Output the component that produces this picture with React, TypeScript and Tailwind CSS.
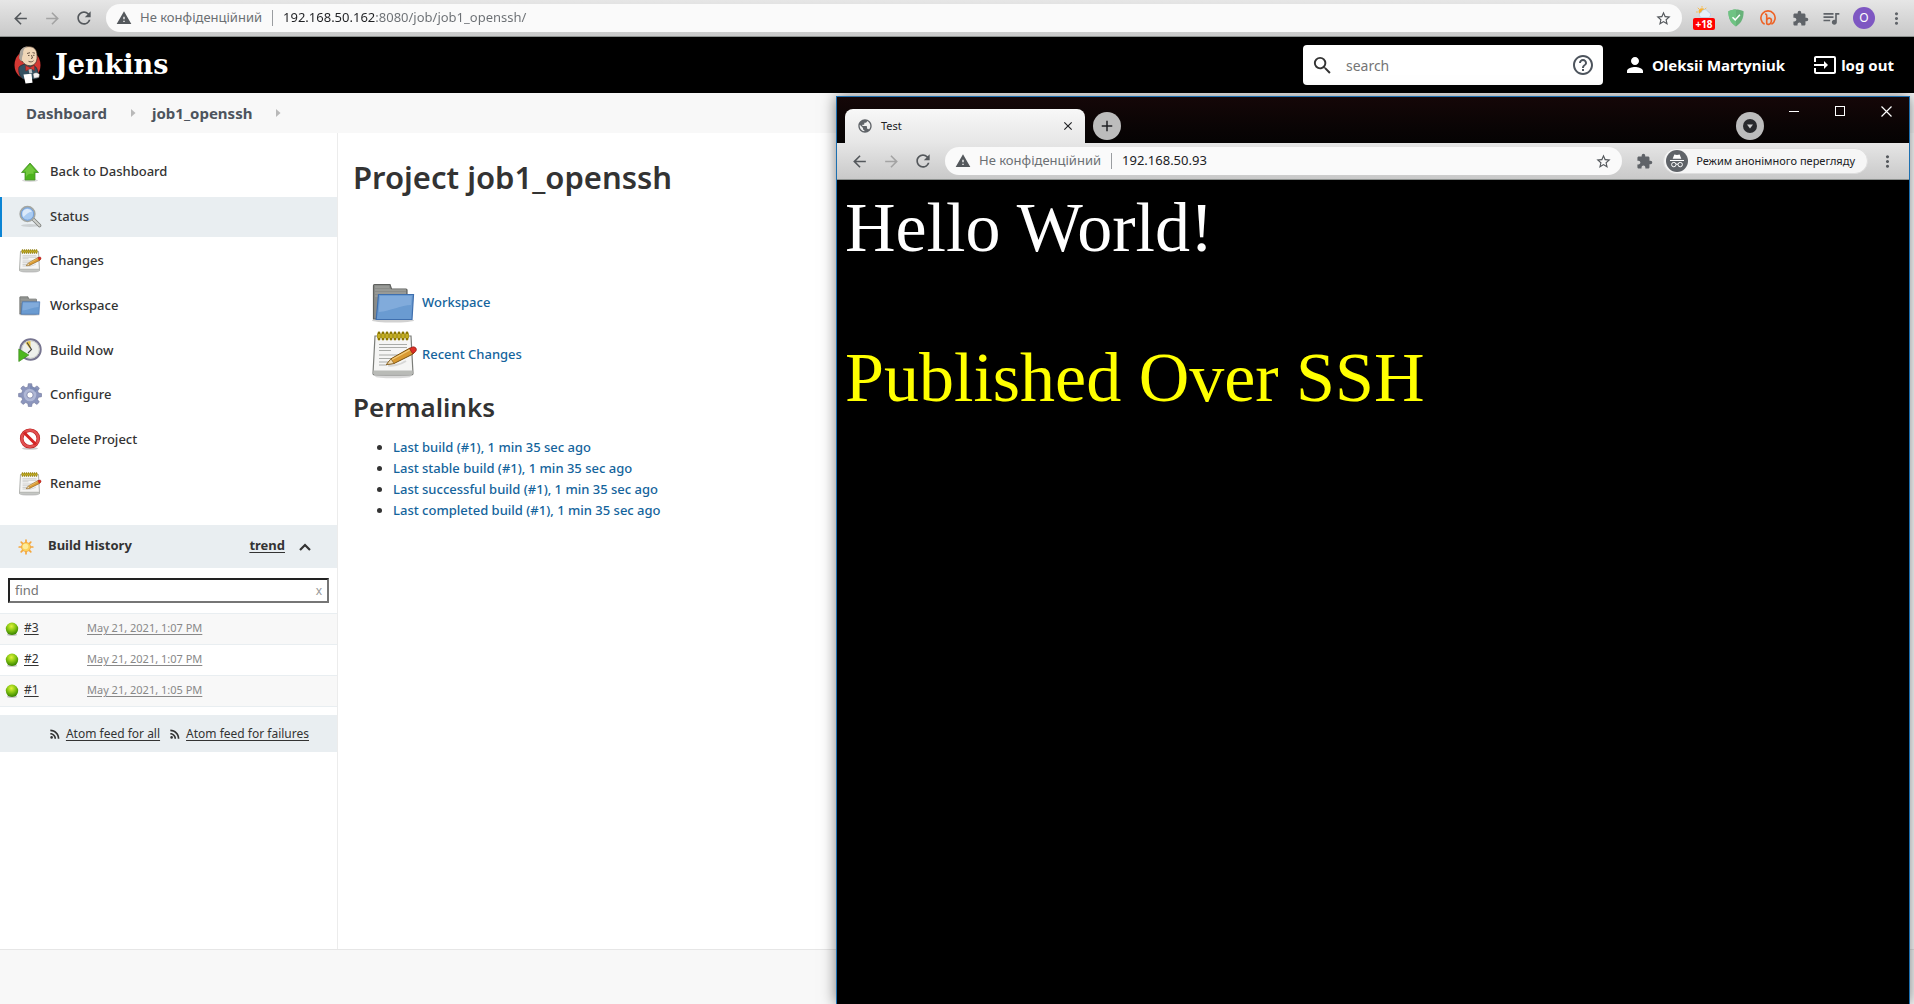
import type { ReactNode } from "react";
import {
  MdArrowBack,
  MdArrowForward,
  MdClose,
  MdExtension,
  MdHelpOutline,
  MdInput,
  MdAdd,
  MdMoreVert,
  MdPerson,
  MdPublic,
  MdQueueMusic,
  MdRefresh,
  MdRssFeed,
  MdSearch,
  MdStarBorder,
  MdWarning,
} from "react-icons/md";

/* ---------- drawings ---------- */

function Butler() {
  return (
    <svg width="27" height="38" viewBox="0 0 27 38" aria-hidden="true">
      <ellipse cx="13.5" cy="19" rx="13" ry="14.5" fill="#d33833" />
      <path d="M5 21c2-2 5-3 8-3 5 0 9 2 10 5l2 7c-1 3-4 3-6 3H9c-3-2-5-7-4-12z" fill="#335061" stroke="#1a2a33" strokeWidth=".7" />
      <path d="M6 9C6 3 10 .6 15 .6S23 4 23 9c.4 5-.6 9-5 10.400-4 1-8-1-9.500-4C6.500 15 5 13 6 9z" fill="#f0d6b7" stroke="#3b2a20" strokeWidth=".7" />
      <path d="M8 15c-2.500-.500-3.600-3-2.400-6C5.300 4 9 .8 13 .6 9.500 3 9 5 9.200 8c-1 2-1.500 4-1.200 7z" fill="#a9a49c" />
      <path d="M13 7.500l3-.8M18.500 6.600l2.500.6M14 9.500h1.500M19 9.300h1.500M17.500 9l1 3-1.500.5M14.500 15.300c2 1 4 .6 5-.6" stroke="#4a382c" strokeWidth=".8" fill="none" />
      <path d="M11.500 19.500l4.500 2 4.500-2.500v5.500L16.500 22.500l-4.700 2.500z" fill="#d33833" stroke="#81211d" strokeWidth=".5" />
      <path d="M14.500 23.500l3-.5.8 4-3 .6z" fill="#f7f7f7" opacity=".7" />
      <path d="M9.500 28.500l8-.8 1 9-7 .9z" fill="#fff" />
      <path d="M19 28c2-2 5-1.500 6.500.5l-.6 3-5 .8z" fill="#f2f2f2" stroke="#555" strokeWidth=".5" />
    </svg>
  );
}

function UpArrow() {
  return (
    <svg width="24" height="24" viewBox="0 0 24 24" aria-hidden="true">
      <ellipse cx="12" cy="20.500" rx="8" ry="1.500" fill="#000" opacity=".15" />
      <path d="M12 3l8.500 9.500H17V20H7v-7.500H3.500z" fill="#4cb31c" stroke="#4a8f2b" strokeWidth=".8" />
      <path d="M12 4.500l6 7h-2.500V14c-4-1-6 0-7.500 3v-5.500H5.700z" fill="#8ad653" opacity=".6" />
    </svg>
  );
}

function Magnifier() {
  return (
    <svg width="24" height="24" viewBox="0 0 24 24" aria-hidden="true">
      <ellipse cx="12" cy="20.500" rx="9" ry="1.500" fill="#000" opacity=".12" />
      <path d="M15.500 14.500l6 6" stroke="#7d7f7c" strokeWidth="3.600" strokeLinecap="round" />
      <path d="M15.500 14.500l6 6" stroke="#cfd1cd" strokeWidth="2" strokeLinecap="round" />
      <circle cx="9.500" cy="9" r="7.300" fill="#a9cbf2" stroke="#a3a6a1" strokeWidth="1.700" />
      <circle cx="9.500" cy="9" r="6.200" fill="none" stroke="#6f9bd6" strokeWidth=".9" />
      <path d="M4.500 9a5 5 0 0 1 9.500-2.200C11 6.500 8 9.500 5.500 12c-.6-.8-1-2-1-3z" fill="#e4effb" opacity=".85" />
    </svg>
  );
}

function Notepad({ size = 24 }: { size?: number }) {
  return (
    <svg width={size} height={size} viewBox="0 0 48 48" aria-hidden="true">
      <ellipse cx="23" cy="45.500" rx="18" ry="1.800" fill="#000" opacity=".15" />
      <path d="M5 5h36l2 37.500a1.500 1.500 0 0 1-1.500 1.500H4.500A1.500 1.500 0 0 1 3 42.500z" fill="#f5f5f4" stroke="#7b7d79" strokeWidth="1.200" />
      <path d="M3.500 39.500h39v3.500h-39z" fill="#b9bbb7" />
      <path d="M7 2.500h32V7H7z" fill="#c4b13a" />
      <path d="M9 2v6M13 2v6M17 2v6M21 2v6M25 2v6M29 2v6M33 2v6M37 2v6" stroke="#8a7500" strokeWidth="2.800" strokeLinecap="round" />
      <path d="M9 3v4M13 3v4M17 3v4M21 3v4M25 3v4M29 3v4M33 3v4M37 3v4" stroke="#f3dc3c" strokeWidth="1.100" />
      <path d="M9 13.500h28M9 16.500h28M9 19.500h12M9 24h26M9 27.500h22M9 31h12M9 34h8" stroke="#a9aba8" strokeWidth="1" />
      <path d="M18 34.500c4 .5 12-.5 18-4.500" stroke="#000" strokeWidth="2" opacity=".12" fill="none" />
      <path d="M16.500 33.500l4.500-5.700L40 17l4 .8.600 3.200-1.600 2-19 9.500z" fill="#d99a32" stroke="#7a5110" strokeWidth="1" />
      <path d="M22 28.500l18-9.700" stroke="#f4cd7c" strokeWidth="1.300" />
      <path d="M39.500 17.500l3-1.500c1.600-.5 3.500.5 3.800 2 .2 1.500-.5 2.700-1.800 3.500l-2 1z" fill="#dd2f26" stroke="#8f1b14" strokeWidth=".7" />
      <path d="M16.500 33.500l4.500-5.700 3 4.700z" fill="#efdcb4" stroke="#7a5110" strokeWidth=".6" />
    </svg>
  );
}

function Folder({ size = 24 }: { size?: number }) {
  return (
    <svg width={size} height={size} viewBox="0 0 48 48" aria-hidden="true">
      <ellipse cx="23" cy="41.500" rx="21" ry="2" fill="#000" opacity=".18" />
      <path d="M3.500 40V6.500a1 1 0 0 1 1-1H20l1.500 4.500H36a1 1 0 0 1 1 1V40z" fill="#8a8c89" stroke="#5f615e" strokeWidth="1.200" />
      <path d="M5 8h14M5 11h31M5 14h31M5 17h6" stroke="#a8aaa7" strokeWidth=".9" />
      <path d="M8.500 15.500h35L42 40.500H6.200z" fill="#6a9bd1" stroke="#3f6fae" strokeWidth="1.200" />
      <path d="M9.800 17h32L41 26c-10 0-20 6-32.200 7z" fill="#8db4e0" opacity=".65" />
    </svg>
  );
}

function ClockPlay() {
  return (
    <svg width="24" height="24" viewBox="0 0 24 24" aria-hidden="true">
      <circle cx="12.500" cy="11.500" r="10.200" fill="#eef0ec" stroke="#76748f" strokeWidth="2" />
      <circle cx="12.500" cy="11.500" r="8.700" fill="none" stroke="#c6c8c4" strokeWidth=".9" />
      <path d="M12.500 11.500L7.500 5a8 8 0 0 1 5-2z" fill="#e8c64b" />
      <path d="M9 4.500l4.500 7-3.500 3.500" stroke="#444" strokeWidth="1.100" fill="none" />
      <path d="M.8 11l10 6-10 6.500z" fill="#4db81e" stroke="#3b8a1c" strokeWidth=".7" />
    </svg>
  );
}

function Gear() {
  return (
    <svg width="24" height="24" viewBox="0 0 24 24" aria-hidden="true">
      <g fill="#8c96bd" stroke="#6d7399" strokeWidth=".6">
        <path d="M10.300.7h3.400l.5 3.200 2.200.9 2.700-1.900 2.300 2.300-1.800 2.800.9 2 3 .6v3.100l-3.100.6-.9 2.100 1.800 2.700-2.400 2.300-2.600-1.800-2.100.9-.6 3.100h-3.200l-.6-3.100-2.100-.9-2.700 1.800-2.200-2.300L4.500 16.400l-.8-2.100-3.100-.6v-3.200l3.100-.5.9-2.200L2.800 5.200l2.200-2.300 2.800 1.900 2-.9z" />
      </g>
      <circle cx="12" cy="12" r="6.300" fill="#b0b8d6" />
      <path d="M12 2v4a6 6 0 0 1 5 3l3-3-3-1z" fill="#6d7fab" opacity=".5" />
      <circle cx="12" cy="12" r="3.200" fill="#fff" stroke="#7a81a8" strokeWidth=".9" />
    </svg>
  );
}

function NoEntry() {
  return (
    <svg width="24" height="24" viewBox="0 0 24 24" aria-hidden="true">
      <ellipse cx="12" cy="21.500" rx="8" ry="1.300" fill="#000" opacity=".2" />
      <circle cx="12" cy="11.500" r="8.300" fill="#fff" stroke="#b92222" strokeWidth="3.600" />
      <circle cx="12" cy="11.500" r="8.300" fill="none" stroke="#e25050" strokeWidth="2.400" />
      <path d="M6 5.500l12 12" stroke="#d42424" strokeWidth="3" />
    </svg>
  );
}

function Sun() {
  return (
    <svg width="16" height="16" viewBox="0 0 16 16" aria-hidden="true">
      <g stroke="#f5a63a" strokeWidth="1.700" strokeLinecap="round">
        <path d="M8 1.200v13.600M1.200 8h13.600M3.200 3.200l9.600 9.600M12.800 3.200l-9.600 9.600" />
      </g>
      <circle cx="8" cy="8" r="4.600" fill="#fbd25a" stroke="#f0a03c" strokeWidth=".7" />
      <circle cx="7.500" cy="7.500" r="2.800" fill="#fdeb9a" />
    </svg>
  );
}

function GreenBall() {
  return (
    <svg width="14" height="14" viewBox="0 0 14 14" aria-hidden="true">
      <defs>
        <radialGradient id="ball" cx=".45" cy=".3" r=".65">
          <stop offset="0" stopColor="#e2f23a" />
          <stop offset=".5" stopColor="#8cc914" />
          <stop offset="1" stopColor="#3f8a00" />
        </radialGradient>
      </defs>
      <ellipse cx="7" cy="12.800" rx="5" ry="1" fill="#000" opacity=".25" />
      <circle cx="7" cy="6.800" r="6.200" fill="url(#ball)" />
    </svg>
  );
}

function Weather() {
  return (
    <svg width="16" height="12" viewBox="0 0 16 12" aria-hidden="true">
      <circle cx="6" cy="5.500" r="3.300" fill="#fbb32f" />
      <path d="M6 .2v1.300M1.800 1.800l1 1M.3 6h1.300M10.300 1.800l-1 1" stroke="#fbb32f" strokeWidth="1" />
      <path d="M5.500 11.500a2.700 2.700 0 0 1-.2-5.300 3.600 3.600 0 0 1 6.900-.2 2.800 2.800 0 0 1 .3 5.500z" fill="#e6f1fa" stroke="#a9c8e4" strokeWidth=".6" />
    </svg>
  );
}

function Shield() {
  return (
    <svg width="16" height="18" viewBox="0 0 16 18" aria-hidden="true">
      <path d="M8 .6c2.600 0 5.200.6 7.600 1.700C15.700 9 13.600 14.200 8 17.400 2.400 14.200.3 9 .4 2.300 2.800 1.200 5.400.6 8 .6z" fill="#67b279" />
      <path d="M8 .6v16.800C2.400 14.200.3 9 .4 2.300 2.800 1.200 5.400.6 8 .6z" fill="#6fc383" />
      <path d="M4.500 8.200l2.700 2.700 4.700-5.200" stroke="#fff" strokeWidth="1.500" fill="none" />
    </svg>
  );
}

function RoundB() {
  return (
    <svg width="16" height="16" viewBox="0 0 16 16" aria-hidden="true">
      <g fill="none" stroke="#ee6123" strokeWidth="1.600">
        <path d="M4.600 14.200A7.100 7.100 0 1 1 11.400 14.200" />
        <path d="M5 4.200c1.500-.4 1.700.4 1.700 1.600v7.400c0 1.200 1.300 1.300 2.600 1 2.400-.6 3-5.400.6-6-1.600-.4-3 .8-3.200 2.400" />
      </g>
    </svg>
  );
}

function Incognito() {
  return (
    <svg width="22" height="22" viewBox="0 0 22 22" aria-hidden="true">
      <circle cx="11" cy="11" r="11" fill="#5f6368" />
      <path d="M8.300 4.500l2.700.6 2.700-.6 1.600 4.300H6.700z" fill="#fff" />
      <path d="M4 10.500h14" stroke="#fff" strokeWidth="1" />
      <g fill="none" stroke="#fff" strokeWidth="1">
        <circle cx="7.800" cy="14.600" r="2.200" />
        <circle cx="14.200" cy="14.600" r="2.200" />
        <path d="M10 14.400q1-.8 2 0" />
      </g>
    </svg>
  );
}

/* ---------- shared browser parts ---------- */

function NavButtons() {
  return (
    <>
      <button aria-label="Назад" className="flex w-8 justify-center text-[#54585c]">
        <MdArrowBack size={19} />
      </button>
      <button aria-label="Вперед" className="flex w-8 justify-center text-[#a3a3a3]">
        <MdArrowForward size={19} />
      </button>
      <button aria-label="Оновити" className="flex w-8 justify-center text-[#54585c]">
        <MdRefresh size={20} />
      </button>
    </>
  );
}

function Omnibox({ children }: { children: ReactNode }) {
  return (
    <div className="flex h-7 flex-1 items-center rounded-full bg-[#fafafa] px-2.5 text-[13px]">
      <MdWarning size={16} className="text-[#54585c]" />
      <span className="ml-2 text-[#6b6f73]">Не конфіденційний</span>
      <span className="mx-2.5 h-4 w-px bg-[#9a9da0]" />
      {children}
      <button aria-label="Закладка" className="text-[#54585c]">
        <MdStarBorder size={17} />
      </button>
    </div>
  );
}

/* ---------- Jenkins page ---------- */

const tasks: { label: string; icon: ReactNode; active?: boolean }[] = [
  { label: "Back to Dashboard", icon: <UpArrow /> },
  { label: "Status", icon: <Magnifier />, active: true },
  { label: "Changes", icon: <Notepad /> },
  { label: "Workspace", icon: <Folder /> },
  { label: "Build Now", icon: <ClockPlay /> },
  { label: "Configure", icon: <Gear /> },
  { label: "Delete Project", icon: <NoEntry /> },
  { label: "Rename", icon: <Notepad /> },
];

const builds = [
  { id: "#3", date: "May 21, 2021, 1:07 PM" },
  { id: "#2", date: "May 21, 2021, 1:07 PM" },
  { id: "#1", date: "May 21, 2021, 1:05 PM" },
];

const permalinks = [
  "Last build (#1), 1 min 35 sec ago",
  "Last stable build (#1), 1 min 35 sec ago",
  "Last successful build (#1), 1 min 35 sec ago",
  "Last completed build (#1), 1 min 35 sec ago",
];

function Crumb({ children }: { children: string }) {
  return (
    <li className="flex items-center">
      <a href="#" className="w-max">
        {children}
      </a>
      <svg width="5" height="8" viewBox="0 0 5 8" className="mr-4 ml-6" aria-hidden="true">
        <path d="M0 0l4.500 4L0 8z" fill="#b9b9b9" />
      </svg>
    </li>
  );
}

function Sidebar() {
  return (
    <aside className="w-[338px] shrink-0 border-r border-[#ececec] pt-[19px] text-[13px] text-[#333]">
      <ul className="flex h-[352px] flex-col justify-between font-medium">
        {tasks.map((t) => (
          <li key={t.label}>
            <a
              href="#"
              className={
                t.active
                  ? "flex h-10 items-center gap-2 border-l-2 border-[#0b84d4] bg-[#e9eef1] pl-4"
                  : "flex h-10 items-center gap-2 pl-[18px]"
              }
            >
              {t.icon}
              {t.label}
            </a>
          </li>
        ))}
      </ul>

      <div className="mt-[21px] flex h-[43px] items-center bg-[#e9eef1] px-[18px] font-bold">
        <Sun />
        <h2 className="ml-[14px] flex-1 pb-0.5">Build History</h2>
        <a href="#" className="pb-0.5 underline underline-offset-2">
          trend
        </a>
        <button aria-label="Collapse" className="mr-2 ml-3.5">
          <svg width="12" height="8" viewBox="0 0 12 8" aria-hidden="true">
            <path d="M1 7l5-5 5 5" fill="none" stroke="#333" strokeWidth="2.200" />
          </svg>
        </button>
      </div>

      <div className="mx-2 my-2.5 flex h-[25px] items-center border-2 border-t-[#222] border-r-[#767676] border-b-[#767676] border-l-[#222] bg-white px-[5px]">
        <input aria-label="find" placeholder="find" className="min-w-0 flex-1 outline-none placeholder:text-[#757575]" />
        <button aria-label="Clear" className="text-[12px] text-[#999]">
          x
        </button>
      </div>

      <table className="w-full border-b border-[#e9eef1] text-[11px]">
        <tbody>
          {builds.map((b) => (
            <tr key={b.id} className="h-[31px] border-t border-[#e9eef1] odd:bg-[#f8f8f8]">
              <td className="w-[87px] pl-[5px]">
                <div className="flex items-center gap-[5px]">
                  <GreenBall />
                  <a href="#" className="pb-0.5 text-[12px] underline underline-offset-2">
                    {b.id}
                  </a>
                </div>
              </td>
              <td className="pb-0.5">
                <a href="#" className="text-[#888] underline underline-offset-2">
                  {b.date}
                </a>
              </td>
            </tr>
          ))}
        </tbody>
      </table>

      <div className="mt-2 flex h-[37px] items-center justify-end gap-2 bg-[#e9eef1] pr-7 text-[12px]">
        {["Atom feed for all", "Atom feed for failures"].map((label) => (
          <a key={label} href="#" className="flex items-center gap-1 underline underline-offset-2">
            <MdRssFeed size={14} />
            {label}
          </a>
        ))}
      </div>
    </aside>
  );
}

function Project() {
  return (
    <main className="flex-1 px-[15px] pt-6 text-[13px] text-[#333]">
      <h1 className="text-[31px] leading-10 font-semibold">Project job1_openssh</h1>
      <div className="mt-[82px] ml-[17px] flex flex-col gap-1 font-medium text-[#14649c]">
        <a href="#" className="flex h-12 items-center gap-1">
          <Folder size={48} />
          Workspace
        </a>
        <a href="#" className="flex h-12 items-center gap-1">
          <Notepad size={48} />
          Recent Changes
        </a>
      </div>
      <h2 className="mt-2.5 text-[26px] leading-9 font-semibold">Permalinks</h2>
      <ul className="mt-3 list-disc pl-10 leading-[21px] font-medium">
        {permalinks.map((p) => (
          <li key={p}>
            <a href="#" className="text-[#14649c]">
              {p}
            </a>
          </li>
        ))}
      </ul>
    </main>
  );
}

/* ---------- incognito window ---------- */

function IncognitoWindow() {
  return (
    <section className="absolute top-[96px] right-1 bottom-0 left-[836px] flex flex-col border border-b-0 border-[#1c6fb0] bg-black shadow-[0_0_14px_rgba(0,0,0,0.5)]">
      <div className="flex h-[46px] items-end bg-linear-to-b from-[#150708] to-[#050303] pl-2">
        <div className="flex h-[34px] w-[240px] items-center rounded-t-lg bg-linear-to-b from-[#f8f8f8] to-[#e6e6e6] pr-2.5 pl-3 text-[#202124]">
          <MdPublic size={16} className="text-[#5f6368]" />
          <span className="ml-2 flex-1 text-[11px]">Test</span>
          <button aria-label="Закрити вкладку">
            <MdClose size={14} />
          </button>
        </div>
        <button aria-label="Нова вкладка" className="mb-[3px] ml-2 flex size-7 items-center justify-center rounded-full bg-[#bcbcbc] text-[#202124]">
          <MdAdd size={18} />
        </button>
        <div className="flex-1" />
        <button aria-label="Пошук вкладок" className="mb-[3px] flex size-7 items-center justify-center rounded-full bg-[#bcbcbc]">
          <svg width="14" height="14" viewBox="0 0 14 14" aria-hidden="true">
            <circle cx="7" cy="7" r="7" fill="#292a2d" />
            <path d="M4 5.500h6L7 9.500z" fill="#cfcfcf" />
          </svg>
        </button>
        <div className="ml-[7px] flex self-start text-white">
          <button aria-label="Згорнути" className="flex h-7 w-[46px] items-center justify-center">
            <span className="h-px w-2.5 bg-white" />
          </button>
          <button aria-label="Розгорнути" className="flex h-7 w-[46px] items-center justify-center">
            <span className="size-2.5 border border-white" />
          </button>
          <button aria-label="Закрити" className="flex h-7 w-[46px] items-center justify-center">
            <svg width="11" height="11" viewBox="0 0 11 11" aria-hidden="true">
              <path d="M.5.5l10 10M10.500.5l-10 10" stroke="#fff" strokeWidth="1.200" />
            </svg>
          </button>
        </div>
      </div>

      <div className="flex h-[37px] items-center border-b border-[#8d918f] bg-linear-to-b from-[#e6e6e6] to-[#c9c9c9] pr-3 pl-1.5">
        <NavButtons />
        <div className="ml-1.5 flex flex-1">
          <Omnibox>
            <input aria-label="Адреса" defaultValue="192.168.50.93" className="min-w-0 flex-1 text-[#202124] outline-none" />
          </Omnibox>
        </div>
        <button aria-label="Розширення" className="ml-3.5 text-[#5f6368]">
          <MdExtension size={17} />
        </button>
        <button className="ml-2.5 flex h-[26px] items-center gap-2 rounded-full border border-[#dedede] bg-[#f6f6f6] pr-3 pl-0.5 text-[11px] text-[#202124]">
          <Incognito />
          Режим анонімного перегляду
        </button>
        <button aria-label="Меню" className="ml-2.5 text-[#54585c]">
          <MdMoreVert size={19} />
        </button>
      </div>

      <div className="flex-1 pt-2.5 pl-2 font-['Liberation_Serif',serif] text-[70px] leading-[75px] text-white">
        <p>Hello World!</p>
        <p className="mt-[75px] text-[#ffff00]">Published Over SSH</p>
      </div>
    </section>
  );
}

export default function App() {
  return (
    <div className="relative flex min-h-screen flex-col overflow-hidden bg-white font-['Noto_Sans',sans-serif]">
      <div className="flex h-[37px] items-center border-b border-[#8d918f] bg-linear-to-b from-[#e6e6e6] to-[#c9c9c9] pr-2 pl-1">
        <NavButtons />
        <div className="ml-1.5 flex flex-1">
          <Omnibox>
            <input
              aria-label="Адреса"
              defaultValue="192.168.50.162:8080/job/job1_openssh/"
              className="min-w-0 flex-1 bg-[linear-gradient(90deg,#202124_93px,#6b6f73_93px)] bg-clip-text text-transparent outline-none"
            />
          </Omnibox>
        </div>
        <div className="flex items-center text-[#5f6368]">
          <button aria-label="Погода" className="ml-[11px] flex w-[22px] flex-col items-center">
            <Weather />
            <span className="h-3 w-full rounded-xs bg-[#f00] text-center text-[10px] leading-3 font-bold text-white">+18</span>
          </button>
          <button aria-label="AdGuard" className="flex w-[42px] justify-center">
            <Shield />
          </button>
          <button aria-label="Bitly" className="flex w-[22px] justify-center">
            <RoundB />
          </button>
          <button aria-label="Розширення" className="flex w-[42px] justify-center">
            <MdExtension size={17} />
          </button>
          <button aria-label="Медіа" className="flex w-[20px] justify-center">
            <MdQueueMusic size={20} />
          </button>
          <button aria-label="Профіль" className="mx-3 flex size-[22px] items-center justify-center rounded-full bg-[#7e57c2] text-[12px] text-white">
            O
          </button>
          <button aria-label="Меню">
            <MdMoreVert size={19} />
          </button>
        </div>
      </div>

      <header className="flex h-14 items-center bg-black pr-5 pl-3.5 text-[15px] font-bold text-white">
        <a href="#" className="flex items-center gap-3.5 font-['DejaVu_Serif',serif] text-[27px]">
          <Butler />
          Jenkins
        </a>
        <div className="flex-1" />
        <form className="flex h-10 w-[300px] items-center rounded-sm bg-white px-2 font-normal">
          <MdSearch size={23} className="text-[#333]" />
          <input aria-label="search" placeholder="search" className="ml-3 min-w-0 flex-1 text-[14px] text-[#333] outline-none placeholder:text-[#757575]" />
          <button type="button" aria-label="Help" className="text-[#4d545d]">
            <MdHelpOutline size={24} />
          </button>
        </form>
        <a href="#" className="ml-5 flex items-center gap-[5px]">
          <MdPerson size={24} />
          Oleksii Martyniuk
        </a>
        <a href="#" className="ml-7 flex items-center gap-1">
          <MdInput size={24} />
          log out
        </a>
      </header>

      <nav className="h-10 bg-[#f8f8f8] pl-[26px] text-[15px] font-bold text-[#4d545d]">
        <ol className="flex h-full items-center">
          <Crumb>Dashboard</Crumb>
          <Crumb>job1_openssh</Crumb>
        </ol>
      </nav>

      <div className="flex flex-1">
        <Sidebar />
        <Project />
      </div>
      <footer className="h-[55px] border-t border-[#e6e6e6] bg-[#f8f8f8]" />

      <IncognitoWindow />
    </div>
  );
}
